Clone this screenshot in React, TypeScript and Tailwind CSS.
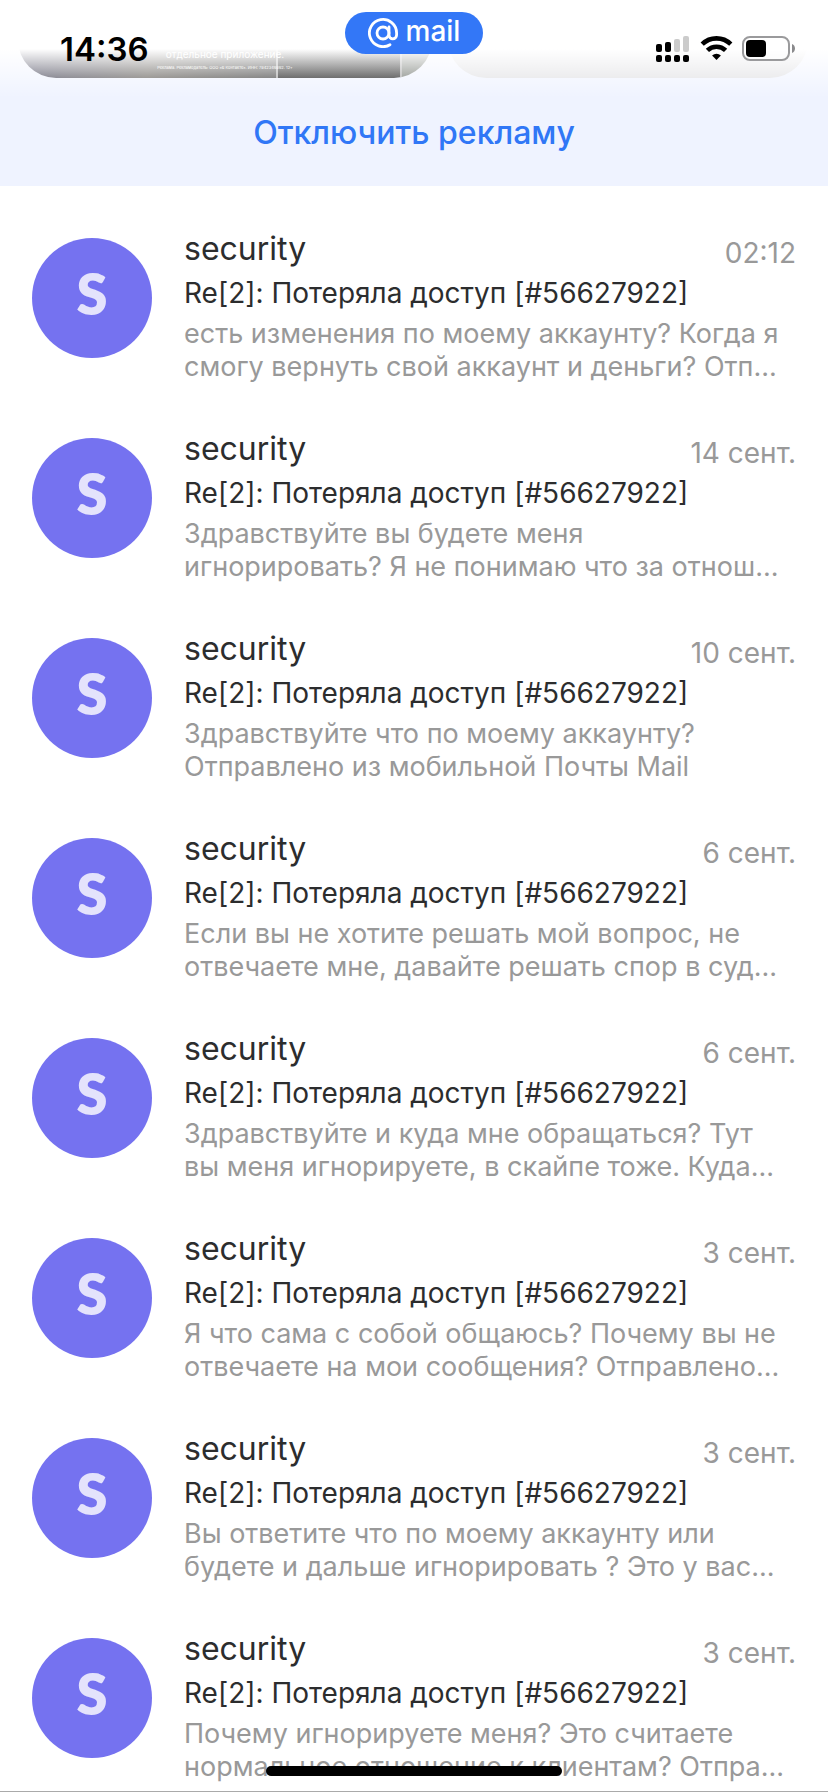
const messages = [
  { id: 1, date: '02:12', preview: 'есть изменения по моему аккаунту? Когда я\nсмогу вернуть свой аккаунт и деньги? Отп...' },
  { id: 2, date: '14 сент.', preview: 'Здравствуйте вы будете меня\nигнорировать? Я не понимаю что за отнош...' },
  { id: 3, date: '10 сент.', preview: 'Здравствуйте что по моему аккаунту?\nОтправлено из мобильной Почты Mail' },
  { id: 4, date: '6 сент.', preview: 'Если вы не хотите решать мой вопрос, не\nотвечаете мне, давайте решать спор в суд...' },
  { id: 5, date: '6 сент.', preview: 'Здравствуйте и куда мне обращаться? Тут\nвы меня игнорируете, в скайпе тоже. Куда...' },
  { id: 6, date: '3 сент.', preview: 'Я что сама с собой общаюсь? Почему вы не\nотвечаете на мои сообщения? Отправлено...' },
  { id: 7, date: '3 сент.', preview: 'Вы ответите что по моему аккаунту или\nбудете и дальше игнорировать ? Это у вас...' },
  { id: 8, date: '3 сент.', preview: 'Почему игнорируете меня? Это считаете\nнормальное отношение к клиентам? Отпра...' }
];

function StatusIcons() {
  return (
    <svg className="h-7 w-35" viewBox="0 0 140 28">
      <g fill="#000">
        <rect x="0" y="9" width="6" height="8" rx="2" />
        <rect x="9" y="7" width="6" height="10" rx="2" />
        <rect x="0" y="20" width="6" height="7" rx="2" />
        <rect x="9" y="20" width="6" height="7" rx="2" />
        <rect x="18" y="20" width="6" height="7" rx="2" />
        <rect x="27" y="20" width="6" height="7" rx="2" />
      </g>
      <rect x="18" y="4" width="6" height="13" rx="2" fill="#cbcbcb" />
      <rect x="27" y="1" width="6" height="16" rx="2" fill="#cbcbcb" />
      <g fill="none" stroke="#000" strokeWidth="4.6">
        <path d="M46.2 9.2a20.500 20.500 0 0 1 28.600 0" />
        <path d="M51.4 15.400a13 13 0 0 1 18.200 0" />
      </g>
      <path d="M60.5 25l-4.400-4.400a6.400 6.400 0 0 1 8.800 0z" fill="#000" />
      <rect x="87" y="2" width="46" height="23" rx="7" fill="#fff" fillOpacity=".6" stroke="#9a9a9c" strokeWidth="2" />
      <rect x="90" y="5" width="20" height="17" rx="4" fill="#000" />
      <path d="M136 9c4 1.600 4 7.400 0 9z" fill="#8a8a8c" />
    </svg>
  );
}

function AdCards() {
  return (
    <div className="flex h-[78px] gap-4 overflow-hidden pl-[18px] pr-5">
      <div className="relative flex w-[414px] shrink-0 overflow-hidden rounded-b-[38px]">
        <div className="w-[258px] bg-linear-to-r from-[#383850] via-[#59554f] to-[#333]" />
        <div className="w-[126px] border-x-2 border-white/60 bg-[#0a0a0a]" />
        <div className="grow bg-[#646a62]" />
        <div className="absolute inset-x-0 top-[46px] text-center text-white">
          <p className="text-[10px] leading-4">отдельное приложение.</p>
          <p className="text-[4px] leading-3">Реклама. Рекламодатель: ООО «В Контакте». ИНН: 7842349892. 12+</p>
        </div>
      </div>
      <div className="grow rounded-b-[38px] bg-[#dfdfe2]" />
    </div>
  );
}

function Avatar() {
  return (
    <div className="mt-[9px] flex size-30 shrink-0 items-center justify-center rounded-full bg-[#7572f0] pb-2 font-[Lato] text-[56px] font-extrabold text-[#e4e3fc]">
      S
    </div>
  );
}

export default function App() {
  return (
    <div className="relative h-screen overflow-hidden bg-white font-[Inter,sans-serif] text-[#2c2d2e]">
      <header className="relative bg-[#eff3ff]">
        <AdCards />
        {/* fade under the status bar */}
        <div className="pointer-events-none absolute inset-x-0 top-0 h-[98px] bg-linear-to-b from-white from-50% to-white/0" />
        <div className="flex h-[108px] items-center justify-center pt-0.5">
          <button type="button" className="cursor-pointer text-[32px] font-medium leading-10 text-[#3077f6]">
            Отключить рекламу
          </button>
        </div>
        <div className="absolute inset-x-0 top-[29px] flex items-center justify-between pl-[60px] pr-8">
          <time className="text-[33px] font-semibold leading-10 text-black">14:36</time>
          <StatusIcons />
        </div>
        <div className="absolute left-1/2 top-3 flex h-[42px] w-[138px] -translate-x-1/2 items-center justify-center gap-2 rounded-full bg-[#3377f7] text-white">
          <svg className="size-[30px]" viewBox="0 0 30 30" fill="none" stroke="currentColor" strokeWidth="2.8" strokeLinecap="round">
            <circle cx="15" cy="15" r="6" />
            <path d="M21 9v8a3.800 3.800 0 0 0 7.600 0v-2A13.600 13.600 0 1 0 22 26.700" />
          </svg>
          <span className="pb-1 text-[28px] font-medium leading-8">mail</span>
        </div>
      </header>

      <ul className="pt-[18px]">
        {messages.map((message) => (
          <li key={message.id} className="flex gap-8 px-8 pt-[25px] pb-[21px]">
            <Avatar />
            <div className="min-w-0 grow">
              <div className="flex justify-between">
                <h2 className="text-[32px] leading-10">security</h2>
                <time className="pt-1 text-[28px] leading-10 text-[#999]">{message.date}</time>
              </div>
              <p className="text-[28px] leading-10">Re[2]: Потеряла доступ [#56627922]</p>
              <p className="mt-1 whitespace-pre text-[27px] leading-[33px] text-[#999]">{message.preview}</p>
            </div>
          </li>
        ))}
      </ul>

      <div className="absolute inset-x-0 bottom-0 h-px bg-[#aaa]" />
      <div className="absolute bottom-4 left-1/2 h-[10px] w-[296px] -translate-x-1/2 rounded-full bg-black" />
    </div>
  );
}
